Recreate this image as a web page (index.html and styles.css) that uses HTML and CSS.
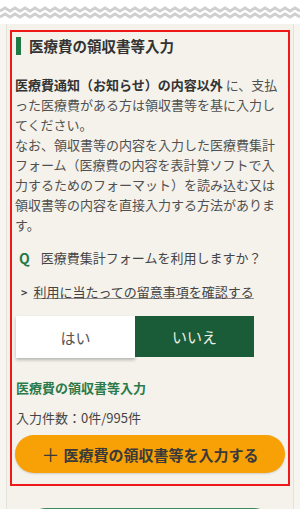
FILE: index.html
```html
<!DOCTYPE html>
<html lang="ja">
<head>
    <meta charset="UTF-8">
    <meta name="viewport" content="width=device-width, initial-scale=1.0">
    <title>医療費の領収書等入力</title>
    <link rel="stylesheet" href="styles.css">
</head>
<body>
    <div class="tear">
        <svg width="300" height="24" viewBox="0 0 300 24">
            <polyline fill="none" stroke="#d0d0d0" stroke-width="2.8" points="0,11 5,8 10,11 15,8 20,11 25,8 30,11 35,8 40,11 45,8 50,11 55,8 60,11 65,8 70,11 75,8 80,11 85,8 90,11 95,8 100,11 105,8 110,11 115,8 120,11 125,8 130,11 135,8 140,11 145,8 150,11 155,8 160,11 165,8 170,11 175,8 180,11 185,8 190,11 195,8 200,11 205,8 210,11 215,8 220,11 225,8 230,11 235,8 240,11 245,8 250,11 255,8 260,11 265,8 270,11 275,8 280,11 285,8 290,11 295,8 300,11"/>
            <polyline fill="none" stroke="#d0d0d0" stroke-width="2.8" points="0,17 5,14 10,17 15,14 20,17 25,14 30,17 35,14 40,17 45,14 50,17 55,14 60,17 65,14 70,17 75,14 80,17 85,14 90,17 95,14 100,17 105,14 110,17 115,14 120,17 125,14 130,17 135,14 140,17 145,14 150,17 155,14 160,17 165,14 170,17 175,14 180,17 185,14 190,17 195,14 200,17 205,14 210,17 215,14 220,17 225,14 230,17 235,14 240,17 245,14 250,17 255,14 260,17 265,14 270,17 275,14 280,17 285,14 290,17 295,14 300,17"/>
        </svg>
    </div>

    <div class="page">
        <div class="card">
            <section class="input-box">
                <h2 class="box-title">医療費の領収書等入力</h2>

                <p class="lead"><strong>医療費通知（お知らせ）の内容以外</strong> に、支払った医療費がある方は領収書等を基に入力してください。<br>なお、領収書等の内容を入力した医療費集計フォーム（医療費の内容を表計算ソフトで入力するためのフォーマット）を読み込む又は領収書等の内容を直接入力する方法があります。</p>

                <div class="question">
                    <span class="q-mark">Q</span>
                    <span>医療費集計フォームを利用しますか？</span>
                </div>

                <a class="notice-link" href="#"><span class="chevron">&gt;</span><span class="notice-text">利用に当たっての留意事項を確認する</span></a>

                <div class="choice">
                    <button class="choice-btn yes">はい</button>
                    <button class="choice-btn no">いいえ</button>
                </div>

                <h3 class="sub-title">医療費の領収書等入力</h3>
                <p class="count">入力件数：0件/995件</p>

                <button class="add-btn"><span class="plus">＋</span>医療費の領収書等を入力する</button>
            </section>

            <div class="next-btn"></div>
        </div>
    </div>
</body>
</html>
```

FILE: styles.css
```css
body {
    margin: 0;
    background-color: #ffffff;
    font-family: 'Noto Sans CJK JP', 'Noto Sans', sans-serif;
    color: #555;
    overflow: hidden;
}

.tear {
    height: 24px;
}

.tear svg {
    display: block;
}

.page {
    background-color: #f7f5f0;
    padding: 0 6px;
    height: 485px;
    overflow: hidden;
}

.card {
    box-sizing: border-box;
    background-color: #f4f2eb;
    border-left: 1px solid #e4e1d9;
    border-right: 1px solid #e4e1d9;
    padding: 6px 3px 0 3px;
    height: 100%;
    overflow: hidden;
}

.input-box {
    border: 2px solid #f01818;
    padding: 5px 3px 11px 3px;
}

.box-title {
    margin: 0 0 0 1px;
    height: 18px;
    line-height: 18px;
    font-size: 14.5px;
    font-weight: bold;
    color: #333;
    border-left: 5px solid #1f7a45;
    padding-left: 8px;
}

.lead {
    margin: 20px 0 0 0;
    font-size: 13px;
    line-height: 20px;
    color: #505050;
}

.lead strong {
    color: #333;
}

.question {
    margin-top: 13px;
    display: flex;
    align-items: center;
    font-size: 13px;
    line-height: 20px;
    color: #444;
}

.q-mark {
    color: #1f7a45;
    font-weight: bold;
    font-size: 14px;
    margin: 0 11px 0 4px;
}

.notice-link {
    display: flex;
    margin-top: 14px;
    font-size: 13px;
    line-height: 20px;
    color: #444;
    text-decoration: none;
}

.chevron {
    font-weight: bold;
    font-size: 11px;
    margin: 0 6px 0 6px;
}

.notice-text {
    text-decoration: underline;
    text-decoration-color: #888;
}

.choice {
    display: grid;
    grid-template-columns: 119px 119px;
    margin-top: 14px;
    margin-left: 1px;
}

.choice-btn {
    height: 42px;
    border: none;
    font-family: inherit;
    font-size: 15px;
    cursor: pointer;
}

.choice-btn.yes {
    background-color: #ffffff;
    color: #555;
    box-shadow: 0 2px 3px rgba(0, 0, 0, 0.25);
}

.choice-btn.no {
    background-color: #1b5c38;
    color: #e9efe3;
    height: 41px;
}

.sub-title {
    margin: 20px 0 0 1px;
    font-size: 13px;
    line-height: 20px;
    font-weight: bold;
    color: #2a7a4a;
}

.count {
    margin: 10px 0 0 1px;
    font-size: 13px;
    line-height: 20px;
    color: #444;
}

.add-btn {
    display: flex;
    justify-content: center;
    align-items: center;
    width: 100%;
    height: 38px;
    margin-top: 7px;
    border: none;
    border-radius: 19px;
    background-color: #f7a106;
    color: #3a3a3a;
    font-family: inherit;
    font-size: 15px;
    font-weight: bold;
    box-shadow: 0 1px 2px rgba(0, 0, 0, 0.15);
}

.plus {
    font-weight: normal;
    font-size: 18px;
    margin-right: 4px;
}

.next-btn {
    margin: 22px 16px 0 16px;
    height: 40px;
    border-radius: 20px;
    background-color: #3d8a5c;
}
```
